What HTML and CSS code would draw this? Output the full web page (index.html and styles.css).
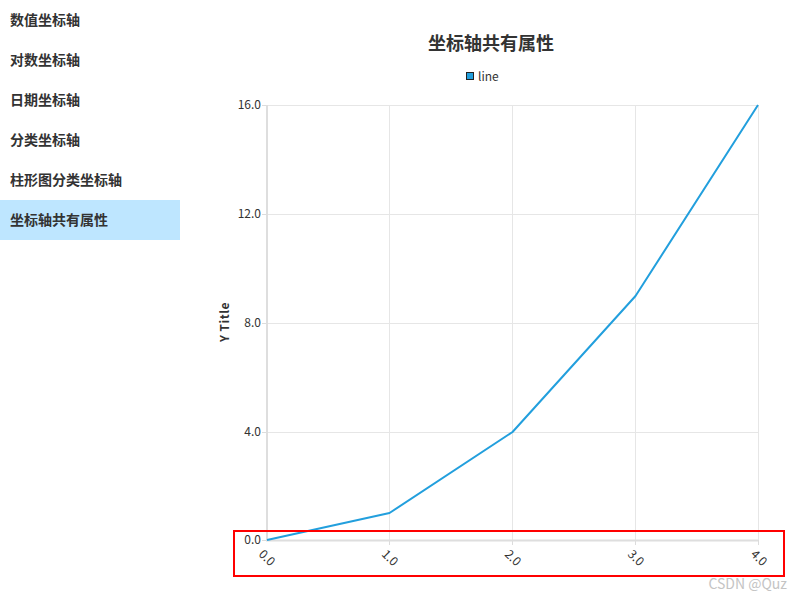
FILE: index.html
```html
<!DOCTYPE html>
<html lang="zh-CN">
<head>
<meta charset="utf-8">
<title>坐标轴共有属性</title>
<link rel="stylesheet" href="styles.css">
</head>
<body>
<div class="page">
  <nav class="sidebar">
    <div class="item">数值坐标轴</div>
    <div class="item">对数坐标轴</div>
    <div class="item">日期坐标轴</div>
    <div class="item">分类坐标轴</div>
    <div class="item">柱形图分类坐标轴</div>
    <div class="item active">坐标轴共有属性</div>
  </nav>
  <main class="main">
    <svg class="chart" width="620" height="600" viewBox="180 0 620 600" xmlns="http://www.w3.org/2000/svg">
      <text class="title" x="491" y="50" text-anchor="middle">坐标轴共有属性</text>
      <rect x="466.5" y="72.5" width="7" height="7" fill="#229fdd" stroke="#222" stroke-width="1"/>
      <text class="legend" x="478" y="80.5">line</text>
      <g class="grid" stroke="#e6e6e6" stroke-width="1">
        <line x1="267" y1="105.5" x2="758" y2="105.5"/>
        <line x1="267" y1="214.5" x2="758" y2="214.5"/>
        <line x1="267" y1="323.5" x2="758" y2="323.5"/>
        <line x1="267" y1="432.5" x2="758" y2="432.5"/>
        <line x1="389.5" y1="105" x2="389.5" y2="540"/>
        <line x1="512.5" y1="105" x2="512.5" y2="540"/>
        <line x1="635.5" y1="105" x2="635.5" y2="540"/>
        <line x1="758.5" y1="105" x2="758.5" y2="540"/>
      </g>
      <g stroke="#dcdcdc" stroke-width="1">
        <line x1="262" y1="105.5" x2="267" y2="105.5"/>
        <line x1="262" y1="214.5" x2="267" y2="214.5"/>
        <line x1="262" y1="323.5" x2="267" y2="323.5"/>
        <line x1="262" y1="432.5" x2="267" y2="432.5"/>
        <line x1="262" y1="540.5" x2="267" y2="540.5"/>
        <line x1="389.5" y1="540" x2="389.5" y2="545"/>
        <line x1="512.5" y1="540" x2="512.5" y2="545"/>
        <line x1="635.5" y1="540" x2="635.5" y2="545"/>
        <line x1="758.5" y1="540" x2="758.5" y2="545"/>
      </g>
      <line x1="267" y1="105" x2="267" y2="541" stroke="#dedede" stroke-width="2"/>
      <line x1="266" y1="540.5" x2="758" y2="540.5" stroke="#dedede" stroke-width="2"/>
      <g class="ylabel" text-anchor="end">
        <text x="261" y="109">16.0</text>
        <text x="261" y="218">12.0</text>
        <text x="261" y="327">8.0</text>
        <text x="261" y="436">4.0</text>
        <text x="261" y="544">0.0</text>
      </g>
      <g class="xlabel">
        <text transform="translate(266 547) rotate(45)" x="0" y="0">0.0</text>
        <text transform="translate(389 547) rotate(45)" x="0" y="0">1.0</text>
        <text transform="translate(512 547) rotate(45)" x="0" y="0">2.0</text>
        <text transform="translate(635 547) rotate(45)" x="0" y="0">3.0</text>
        <text transform="translate(758 547) rotate(45)" x="0" y="0">4.0</text>
      </g>
      <text class="ytitle" transform="translate(229 322) rotate(-90)" text-anchor="middle">Y Title</text>
      <polyline points="267,540 389.5,513 512.5,432 635.5,296 758,105" fill="none" stroke="#229fdd" stroke-width="2" stroke-linejoin="round"/>
      <rect x="234" y="531" width="550" height="45" fill="none" stroke="#ff0000" stroke-width="2"/>
      <text class="mark" x="787" y="589" text-anchor="end">CSDN @Quz</text>
    </svg>
  </main>
</div>
</body>
</html>
```
FILE: styles.css
```css
html, body {
  margin: 0;
  padding: 0;
  background: #ffffff;
}
body {
  font-family: "Noto Sans CJK SC", "Noto Sans", sans-serif;
  color: #333333;
}
.page {
  display: flex;
  width: 800px;
  height: 600px;
  overflow: hidden;
}
.sidebar {
  width: 180px;
  flex: none;
  display: flex;
  flex-direction: column;
}
.item {
  height: 40px;
  line-height: 38px;
  padding-left: 10px;
  font-size: 14px;
  font-weight: bold;
  color: #333333;
}
.item.active {
  background: #bee6ff;
}
.main {
  flex: 1;
}
.chart {
  display: block;
}
.chart text {
  font-family: "Noto Sans CJK SC", "Noto Sans", sans-serif;
  fill: #333333;
}
.chart .title {
  font-size: 18px;
  font-weight: bold;
}
.chart .legend {
  font-size: 12px;
}
.chart .ylabel text,
.chart .xlabel text {
  font-size: 12px;
}
.chart .xlabel text {
  dominant-baseline: hanging;
}
.chart .ytitle {
  font-size: 12px;
  font-weight: bold;
  letter-spacing: 0.5px;
}
.chart .mark {
  font-size: 14px;
  fill: #c4c4c4;
}
```
